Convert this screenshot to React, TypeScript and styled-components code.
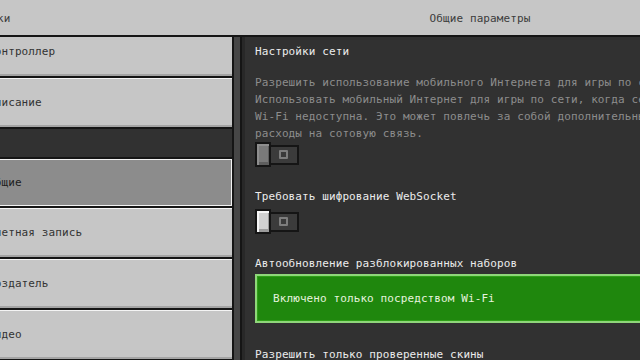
import React from "react";
import styled, { createGlobalStyle } from "styled-components";

//color
const colors = {
  stone: "#c6c6c6",
  stoneDark: "#8c8c8c",
  panel: "#313131",
  edge: "#151515",
  headerText: "#3c3c3c",
  label: "#ececec",
  muted: "#8d8d8d",
  green: "#1f870d",
};

const GlobalStyle = createGlobalStyle`
  html, body {
    margin: 0;
    padding: 0;
    background: ${colors.panel};
  }
  body {
    font-family: "DejaVu Sans Mono", "Liberation Mono", monospace;
    font-size: 11px;
    letter-spacing: 0.1px;
  }
`;

//the screen is wider than the window, we only see a slice of it
const Viewport = styled.div`
  width: 640px;
  height: 360px;
  overflow: hidden;
  background: ${colors.panel};
`;

const Screen = styled.div`
  width: 780px;
  height: 360px;
  margin-left: -60px;
  display: flex;
  flex-direction: column;
`;

//top bar
const Header = styled.header`
  flex: none;
  display: grid;
  grid-template-columns: 300px 1fr;
  align-items: center;
  height: 35px;
  background: ${colors.stone};
  border-bottom: 2px solid ${colors.edge};
`;

const HeaderTitle = styled.div<{ $center?: boolean }>`
  color: ${colors.headerText};
  white-space: nowrap;
  text-align: ${(p) => (p.$center ? "center" : "left")};
  padding-left: ${(p) => (p.$center ? 0 : 10)}px;
  padding-top: 1px;
`;

const Body = styled.div`
  flex: 1;
  min-height: 0;
  display: grid;
  grid-template-columns: 300px 1fr;
`;

//left menu
const Sidebar = styled.nav`
  display: flex;
  min-height: 0;
  overflow: hidden;
`;

const NavList = styled.div`
  flex: 1;
  display: flex;
  flex-direction: column;
  margin-top: -10px;
`;

const NavButton = styled.div<{ $selected?: boolean }>`
  box-sizing: border-box;
  flex: none;
  height: 51px;
  display: flex;
  align-items: center;
  padding-left: 48px;
  white-space: nowrap;
  color: ${(p) => (p.$selected ? "#1d1d1d" : "#333333")};
  background: ${(p) => (p.$selected ? colors.stoneDark : colors.stone)};
  border-bottom: 2px solid ${colors.edge};
  border-top: ${(p) => (p.$selected ? `2px solid ${colors.edge}` : "none")};
  box-shadow: ${(p) =>
    p.$selected
      ? "inset 0 0 0 1px #f2f2f2"
      : "inset 0 1px 0 #f4f4f4, inset 0 -2px 0 #a4a4a4"};
`;

const SectionGap = styled.div`
  flex: none;
  height: 28px;
`;

const ScrollTrack = styled.div`
  flex: none;
  width: 6px;
  background: #464646;
  border-left: 2px solid ${colors.edge};
`;

//right side
const Content = styled.main`
  min-height: 0;
  overflow: hidden;
  display: flex;
  flex-direction: column;
  padding: 7px 13px 0;
  border-left: 2px solid ${colors.edge};
  box-shadow: inset 3px 0 0 #282828;

  & > * {
    flex: none;
  }
`;

const Heading = styled.div`
  line-height: 16px;
  color: ${colors.label};
  white-space: nowrap;
  margin-bottom: 14px;
`;

const Line = styled.div<{ $muted?: boolean }>`
  line-height: 17px;
  white-space: nowrap;
  color: ${(p) => (p.$muted ? colors.muted : colors.label)};
`;

const Label = styled.div<{ $space?: number }>`
  line-height: 16px;
  white-space: nowrap;
  color: ${colors.label};
  margin-top: ${(p) => p.$space ?? 22}px;
  margin-bottom: 4px;
`;

const Toggle = styled.div`
  display: flex;
  align-items: center;
  height: 25px;
`;

const Knob = styled.div<{ $disabled?: boolean }>`
  box-sizing: border-box;
  width: 16px;
  height: 25px;
  position: relative;
  z-index: 1;
  border: 2px solid ${colors.edge};
  background: ${(p) => (p.$disabled ? "#7a7a7a" : "#d2d2d2")};
  box-shadow: ${(p) =>
    p.$disabled
      ? "inset 2px 2px 0 #8e8e8e, inset -1px -3px 0 #5e5e5e"
      : "inset 2px 2px 0 #f6f6f6, inset -1px -3px 0 #9c9c9c"};
`;

const Track = styled.div`
  box-sizing: border-box;
  width: 29px;
  height: 20px;
  margin-left: -1px;
  display: flex;
  align-items: center;
  justify-content: center;
  background: #3b3b3b;
  border: 2px solid ${colors.edge};
  border-left: none;
`;

const OffMark = styled.div`
  box-sizing: border-box;
  width: 9px;
  height: 9px;
  border: 2px solid #7e7e7e;
  border-radius: 1px;
`;

const WideButton = styled.div`
  box-sizing: border-box;
  height: 49px;
  margin-top: -2px;
  display: flex;
  align-items: center;
  padding-left: 16px;
  white-space: nowrap;
  color: #e6f3df;
  background: ${colors.green};
  border: 2px solid #8fd67a;
  box-shadow: inset 0 0 0 1px #2ea017;
`;

const navItems = [
  { title: "Контроллер" },
  { title: "Описание" },
  { gap: true },
  { title: "Общие", selected: true },
  { title: "Учетная запись" },
  { title: "Создатель" },
  { title: "Видео" },
  { title: "Звук" },
];

const OffToggle: React.FC<{ disabled?: boolean }> = ({ disabled }) => (
  <Toggle>
    <Knob $disabled={disabled} />
    <Track>
      <OffMark />
    </Track>
  </Toggle>
);

const App: React.FC = () => {
  return (
    <>
      <GlobalStyle />
      <Viewport>
        <Screen>
          <Header>
            <HeaderTitle>Настройки</HeaderTitle>
            <HeaderTitle $center>Общие параметры</HeaderTitle>
          </Header>
          <Body>
            <Sidebar>
              <NavList>
                {navItems.map((item, i) =>
                  item.gap ? (
                    <SectionGap key={i} />
                  ) : (
                    <NavButton key={i} $selected={item.selected}>
                      {item.title}
                    </NavButton>
                  )
                )}
              </NavList>
              <ScrollTrack />
            </Sidebar>
            <Content>
              <Heading>Настройки сети</Heading>
              <Line $muted>
                Разрешить использование мобильного Интернета для игры по сети
              </Line>
              <Line $muted>
                Использовать мобильный Интернет для игры по сети, когда сеть
              </Line>
              <Line $muted>
                Wi-Fi недоступна. Это может повлечь за собой дополнительные
              </Line>
              <Line $muted>расходы на сотовую связь.</Line>
              <OffToggle disabled />

              <Label>Требовать шифрование WebSocket</Label>
              <OffToggle />

              <Label>Автообновление разблокированных наборов</Label>
              <WideButton>Включено только посредством Wi-Fi</WideButton>

              <Label $space={24}>Разрешить только проверенные скины</Label>
            </Content>
          </Body>
        </Screen>
      </Viewport>
    </>
  );
};

export default App;
